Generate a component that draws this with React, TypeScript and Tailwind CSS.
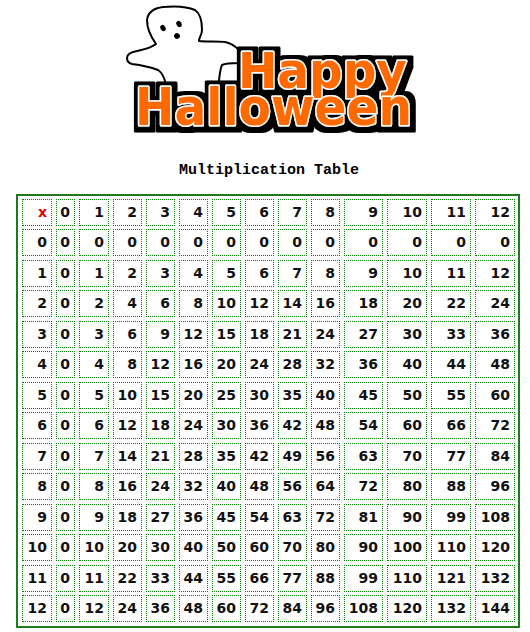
import React from 'react';

const nums = Array.from({ length: 13 }, (_, i) => i);

const cell =
    'flex h-[27px] items-center justify-end self-start border border-dotted border-[#008000] pr-[4px]';

function Logo() {
    return (
        <svg width="530" height="161" viewBox="0 0 530 161" className="block">
            <defs>
                <filter id="outline" x="-10%" y="-30%" width="120%" height="160%">
                    <feMorphology in="SourceAlpha" operator="dilate" radius="5" result="grown" />
                    <feOffset in="grown" dx="1" dy="1" result="moved" />
                    <feFlood floodColor="#000" />
                    <feComposite in2="moved" operator="in" result="black" />
                    <feMerge>
                        <feMergeNode in="black" />
                        <feMergeNode in="SourceGraphic" />
                    </feMerge>
                </filter>
            </defs>

            {/* ghost */}
            <path
                d="M127,58 C127,54 131,52 137,51 C145,49 151,48 156,44 C151,37 147,29 147,20 C148,12 155,8 163,7 C173,6 186,6 195,10 C201,14 202,22 202,30 C202,35 199,37 199,41 C207,42 217,41 225,42 C231,43 235,46 239,50 L239,63 C232,63 226,63 222,65 C220,69 219,76 218,95 L168,95 C166,80 163,73 158,70 C150,67 140,65 132,64 C128,63 127,61 127,58 Z"
                fill="#fff"
                stroke="#000"
                strokeWidth="2"
                strokeLinejoin="round"
            />
            <ellipse cx="163" cy="28" rx="2.5" ry="3.3" transform="rotate(-30 163 28)" fill="#000" />
            <ellipse cx="179" cy="24" rx="2.5" ry="3.3" transform="rotate(-30 179 24)" fill="#000" />
            <ellipse cx="177" cy="36" rx="2.8" ry="3" transform="rotate(-30 177 36)" fill="#000" />

            <g filter="url(#outline)" fontFamily="'DejaVu Sans', sans-serif" fontWeight="bold">
                <text
                    x="238"
                    y="88"
                    fontSize="49"
                    textLength="169"
                    lengthAdjust="spacingAndGlyphs"
                    fill="#ff6a00"
                    stroke="#fff"
                    strokeWidth="3"
                    paintOrder="stroke"
                    strokeLinejoin="round"
                >
                    Happy
                </text>
                <text
                    x="135"
                    y="125"
                    fontSize="51"
                    textLength="277"
                    lengthAdjust="spacingAndGlyphs"
                    fill="#ff6a00"
                    stroke="#fff"
                    strokeWidth="3"
                    paintOrder="stroke"
                    strokeLinejoin="round"
                >
                    Halloween
                </text>
            </g>
        </svg>
    );
}

export default function App() {
    return (
        <div className="w-[530px] bg-white">
            <Logo />

            <div className="ml-[16px] w-[506px]">
                {/* Heading */}
                <p className="text-center font-['Liberation_Mono',monospace] text-[15px] font-bold leading-5 text-black">
                    Multiplication Table
                </p>

                <div className="mt-[13px] inline-grid grid-cols-[30px_19px_30px_29px_29px_29px_29px_29px_29px_29px_39px_40px_40px_40px] grid-rows-[27px_28px_27px_28px_27px_28px_27px_28px_27px_28px_27px_28px_27px_28px] gap-x-[4px] gap-y-[3px] border-2 border-[#1f7a1f] pt-[3px] pr-[3px] pb-[3px] pl-[4px] font-['DejaVu_Sans',sans-serif] text-[14px] font-bold text-[#111]">
                    {/* header row */}
                    <div className={cell + ' text-[#e00000]'}>x</div>
                    {nums.map((n) => (
                        <div key={'h' + n} className={cell}>
                            {n}
                        </div>
                    ))}

                    {nums.map((row) => (
                        <React.Fragment key={row}>
                            <div className={cell}>{row}</div>
                            {nums.map((col) => (
                                <div key={col} className={cell}>
                                    {row * col}
                                </div>
                            ))}
                        </React.Fragment>
                    ))}
                </div>
            </div>
        </div>
    );
}
